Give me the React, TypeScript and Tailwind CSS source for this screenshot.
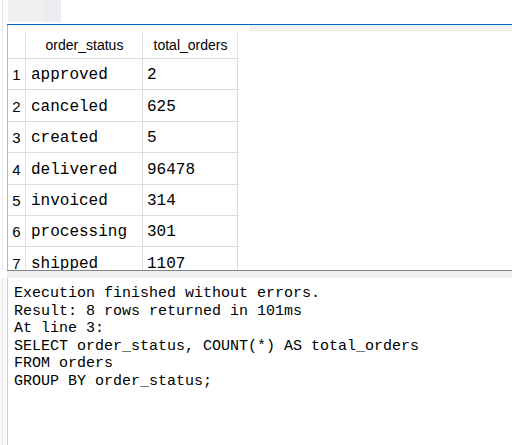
const rows = [
  { n: 1, status: 'approved', total: '2', h: 'h-[31px]' },
  { n: 2, status: 'canceled', total: '625', h: 'h-[32px]' },
  { n: 3, status: 'created', total: '5', h: 'h-[31px]' },
  { n: 4, status: 'delivered', total: '96478', h: 'h-[32px]' },
  { n: 5, status: 'invoiced', total: '314', h: 'h-[31px]' },
  { n: 6, status: 'processing', total: '301', h: 'h-[31px]' },
  { n: 7, status: 'shipped', total: '1107', h: 'h-[32px]' },
]

const log = [
  'Execution finished without errors.',
  'Result: 8 rows returned in 101ms',
  'At line 3:',
  'SELECT order_status, COUNT(*) AS total_orders',
  'FROM orders',
  'GROUP BY order_status;',
]

export default function App() {
  return (
    <div className="w-[512px] h-[445px] bg-white flex flex-col overflow-hidden text-black">
      {/* tab strip */}
      <div className="h-[24px] flex shrink-0">
        <div className="w-[2px]" />
        <div className="w-px bg-[#e6e6e6]" />
        <div className="w-[5px]" />
        <div className="w-[36px] h-[22px] bg-[#f0f0f0]" />
        <div className="w-[17px] h-[22px] bg-[#ebebf4]" />
      </div>
      <div className="h-px ml-[7px] bg-[#0068d0] shrink-0" />

      {/* results grid */}
      <div className="h-[245px] flex shrink-0">
        <div className="w-[7px] flex">
          <div className="w-[2px]" />
          <div className="w-px bg-[#e6e6e6]" />
        </div>
        <div className="flex-1 border-l border-[#b9b9b9] overflow-hidden relative">
          <div className="absolute right-0 top-0 left-[242px] h-[6px] bg-[#f0f0f0]" />
          <div className="w-[231px] font-['Liberation_Sans',Arial,sans-serif]">
            <div className="h-[33px] flex pt-[6px]">
              <div className="w-[18px] border-r border-[#e2e2e2]" />
              <div className="w-[117px] border-r border-[#e2e2e2] flex items-center justify-center text-[14px] pt-[1px] pl-[1px]">
                order_status
              </div>
              <div className="w-[95px] border-r border-[#e2e2e2] flex items-center justify-center text-[14px] pt-[1px] pl-[1px]">
                total_orders
              </div>
            </div>
            {rows.map(r => (
              <div key={r.n} className={`${r.h} flex border-t border-[#dcdcdc]`}>
                <div className="w-[18px] border-r border-[#e2e2e2] flex items-center justify-center text-[15px] pt-[3px]">
                  {r.n}
                </div>
                <div className="w-[117px] border-r border-[#dcdcdc] flex items-center pl-[5px] pt-[2px] font-['Liberation_Mono','Courier_New',monospace] text-[16px]">
                  {r.status}
                </div>
                <div className="w-[95px] border-r border-[#dcdcdc] flex items-center pl-[4px] pt-[2px] font-['Liberation_Mono','Courier_New',monospace] text-[16px]">
                  {r.total}
                </div>
              </div>
            ))}
          </div>
        </div>
      </div>

      {/* splitter */}
      <div className="h-px ml-[7px] bg-[#80848c] shrink-0" />
      <div className="h-[7px] ml-[7px] bg-[#f0f0f0] shrink-0" />

      {/* message pane */}
      <div className="flex-1 flex">
        <div className="w-[7px] flex bg-[#fafafa]">
          <div className="w-[2px]" />
          <div className="w-px bg-[#e6e6e6]" />
        </div>
        <div className="flex-1 border-l border-[#cfcfcf] pl-[6px] pt-[7px] font-['Liberation_Mono','Courier_New',monospace] text-[15px] leading-[17.5px]">
          {log.map((line, i) => (
            <div key={i} className="whitespace-pre">{line}</div>
          ))}
        </div>
      </div>
    </div>
  )
}
